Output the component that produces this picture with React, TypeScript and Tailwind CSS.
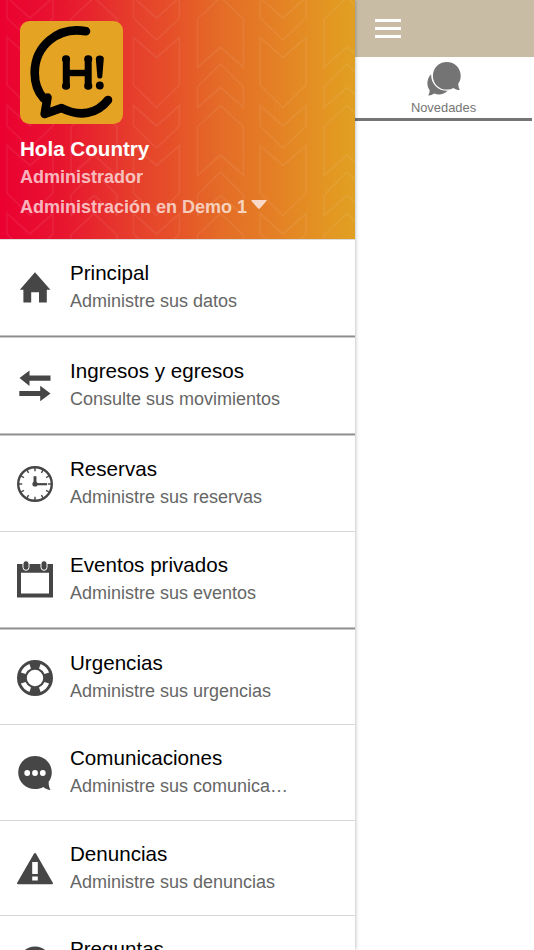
import type { ReactNode } from "react";
import { clsx } from "clsx";

interface MenuItem {
  title: string;
  subtitle: string;
  icon: ReactNode;
  divider: "thick" | "thin";
}

const HomeIcon = () => (
  <svg className="h-9 w-9" viewBox="0 0 36 36" fill="currentColor">
    <path d="M18 2.300 2.800 19.800h3.600v12.800h7.800V22.200h7.800v10.400h7.800V19.800h3.600z" />
  </svg>
);

const SwapIcon = () => (
  <svg className="h-9 w-9" viewBox="0 0 36 36" fill="currentColor">
    <path d="M2.500 10 12.500 2.400v5.200h21v5.100h-21v5.200z" />
    <path d="M33.500 25.500 23.200 17.800V23H2.300v5.100h20.900v5.200z" />
  </svg>
);

const ClockIcon = () => (
  <svg className="h-9 w-9" viewBox="0 0 36 36" fill="none" stroke="currentColor">
    <circle cx="18" cy="18" r="16.800" strokeWidth="2.400" />
    {[0, 30, 60, 90, 120, 150, 180, 210, 240, 270, 300, 330].map((deg) => (
      <path key={deg} d="M18 2v3.200" strokeWidth="1.400" transform={`rotate(${deg} 18 18)`} />
    ))}
    <path d="M18 18V10.200" strokeWidth="2.900" />
    <path d="M18 18.200h12" strokeWidth="2.200" />
    <circle cx="18" cy="18" r="2.600" fill="currentColor" stroke="none" />
  </svg>
);

const CalendarIcon = () => (
  <svg className="h-9 w-9 overflow-visible" viewBox="0 0 36 36">
    <path fill="currentColor" fillRule="evenodd" d="M0 2h36v33.600H0zM4 10.800v20.800h28V10.800z" />
    <rect x="6" y="-1.300" width="6" height="9.600" rx="3" fill="currentColor" stroke="white" strokeWidth="1" />
    <rect x="24" y="-1.300" width="6" height="9.600" rx="3" fill="currentColor" stroke="white" strokeWidth="1" />
  </svg>
);

const LifebuoyIcon = () => (
  <svg className="h-9 w-9" viewBox="0 0 36 36" fill="none">
    <circle cx="18" cy="18" r="13.100" stroke="currentColor" strokeWidth="9.800" />
    {[0, 90, 180, 270].map((deg) => (
      <path
        key={deg}
        d="M23.600 3.900A15.200 15.200 0 0 1 32.100 12.400L27.500 14A10.300 10.300 0 0 0 22 8.500Z"
        fill="white"
        transform={`rotate(${deg} 18 18)`}
      />
    ))}
  </svg>
);

const ChatIcon = () => (
  <svg className="h-9 w-9" viewBox="0 0 36 36">
    <path
      fill="currentColor"
      d="M18 1C8.500 1 1.200 8.400 1.200 17.500S8.500 34 18 34c3.300 0 6-.7 8.300-2.100 2.200 1.800 4.500 2.800 7.200 3-1.300-2.400-2-5-1.800-8.100 1.900-2.700 3.100-5.700 3.100-9.300C34.800 8.400 27.500 1 18 1z"
    />
    <circle cx="10.200" cy="18" r="2.900" fill="white" />
    <circle cx="18" cy="18" r="2.900" fill="white" />
    <circle cx="25.800" cy="18" r="2.900" fill="white" />
  </svg>
);

const WarningIcon = () => (
  <svg className="h-9 w-9" viewBox="0 0 36 36" fill="currentColor">
    <path
      fillRule="evenodd"
      d="M18 2c.5 0 .8.200 1.100.7l16.700 29c.5.900.1 1.500-.9 1.500H1.100c-1 0-1.400-.6-.9-1.500l16.700-29c.3-.5.6-.7 1.100-.7zM15.200 11.100v12h5.600v-12zM15.200 25.400v4h5.600v-4z"
    />
  </svg>
);

const QuestionIcon = () => (
  <svg className="h-9 w-9" viewBox="0 0 36 36" fill="currentColor">
    <circle cx="18" cy="17" r="16.500" />
  </svg>
);

const menu: MenuItem[] = [
  { title: "Principal", subtitle: "Administre sus datos", icon: <HomeIcon />, divider: "thick" },
  { title: "Ingresos y egresos", subtitle: "Consulte sus movimientos", icon: <SwapIcon />, divider: "thick" },
  { title: "Reservas", subtitle: "Administre sus reservas", icon: <ClockIcon />, divider: "thin" },
  { title: "Eventos privados", subtitle: "Administre sus eventos", icon: <CalendarIcon />, divider: "thick" },
  { title: "Urgencias", subtitle: "Administre sus urgencias", icon: <LifebuoyIcon />, divider: "thin" },
  { title: "Comunicaciones", subtitle: "Administre sus comunica…", icon: <ChatIcon />, divider: "thin" },
  { title: "Denuncias", subtitle: "Administre sus denuncias", icon: <WarningIcon />, divider: "thin" },
  { title: "Preguntas", subtitle: "", icon: <QuestionIcon />, divider: "thin" },
];

// Outlined arrows that repeat behind the profile block
const ArrowPattern = () => (
  <svg className="absolute inset-0 h-full w-full" fill="none" stroke="white" strokeOpacity="0.065" strokeWidth="1.700">
    <defs>
      <g id="arrows-down">
        <path d="M-23 37.500 0 57.500 23 37.500V85L0 107.500-23 85z" />
        <path d="M-23 105.500 0 126 23 105.500V126L0 148-23 126z" />
      </g>
      <g id="arrows-up">
        <path d="M-23 67.500 0 47 23 67.500V19L0-2.500-23 19z" />
        <path d="M-23 107.500 0 87.500 23 107.500V87L0 64-23 87z" />
      </g>
    </defs>
    {[-108, 0, 108, 216].map((y) => (
      <g key={y}>
        {[30, 156.5, 283].map((x) => (
          <use key={x} href="#arrows-down" x={x} y={y} />
        ))}
        {[94, 220.5, 347].map((x) => (
          <use key={x} href="#arrows-up" x={x} y={y} />
        ))}
      </g>
    ))}
  </svg>
);

const Logo = () => (
  <svg className="block h-[103px] w-[103px]" viewBox="0 0 103 103" fill="none" stroke="black">
    <rect width="103" height="103" rx="9.500" fill="#e4a323" stroke="none" />
    <g strokeWidth="8.600" strokeLinecap="round" strokeLinejoin="round">
      <path d="M66 10.300C38 5 14.700 25 14.700 52c0 11 3.300 19 9 25.500" />
      <path d="M27.500 76.500 24.700 93 41.500 87C60 96.500 77 93 88 79" />
    </g>
    <path d="M46.300 38v27M68.200 38v27" strokeWidth="7" />
    <path d="M46 52h22" strokeWidth="6.400" />
    <path d="M45.800 38h.5M68 38h.5M45.800 65h.5M68 65h.5" strokeWidth="7.600" strokeLinecap="round" />
    <path d="M75.800 37.500c0-4 8-4 8 0l-1.500 18c-.2 2.800-4.800 2.800-5 0z" fill="black" stroke="none" />
    <circle cx="79.800" cy="64.500" r="3.900" fill="black" stroke="none" />
  </svg>
);

const NewsIcon = () => (
  <svg className="h-[34px] w-[34px]" viewBox="0 0 34 34" fill="#747474">
    <path d="M4.100 12.200C1.400 14.800.3 18.300.4 21.800c.1 2.500.9 4.600 2.300 6.400-.1 2-.6 3.700-1.400 5.500 2.200-.2 4.300-.9 6-2.100 4.800 1.700 9.700.9 13.400-2.800C11.900 29.200 3.800 22.300 4.100 12.200z" />
    <path d="M19.800.1C11.900.1 5.900 6.300 5.900 13.900s6 13.700 13.900 13.700c2.500 0 4.600-.6 6.500-1.600 1.800 1.300 4 2 6.500 2.100-1-2.200-1.500-4.200-1.600-6.400 1.600-2.200 2.500-4.900 2.500-7.800C33.700 6.300 27.700.1 19.800.1z" />
  </svg>
);

function MenuRow({ item }: { item: MenuItem }) {
  return (
    <li>
      <a
        href="#"
        className={clsx("flex items-center pl-[17px]", item.divider === "thick" ? "h-[95px] pb-px" : "h-[94.500px]")}
      >
        <span className="mt-0.5 shrink-0 text-[#464646]">{item.icon}</span>
        <div className="ml-[17px] w-[222px]">
          <p className="text-[20.600px] leading-7 text-black">{item.title}</p>
          <p className="h-7 truncate text-[18px] leading-7 text-[#666]">{item.subtitle}</p>
        </div>
      </a>
      <div
        className={clsx(
          item.divider === "thick"
            ? "h-[3px] border-y border-t-[#c2c2c2] border-b-[#cacaca] bg-[#8e8e8e]"
            : "h-px bg-[#d6d6d6]"
        )}
      />
    </li>
  );
}

export default function App() {
  return (
    <div className="flex h-[950px] w-[534px] overflow-hidden bg-white font-['Liberation_Sans',Arial,sans-serif]">
      <aside className="relative z-10 w-[355px] shrink-0 bg-white shadow-[0_0_4px_rgba(0,0,0,0.35)]">
        <header className="relative h-[239px] overflow-hidden bg-[linear-gradient(90deg,#eb0031_0%,#e8162f_18%,#e63f2c_38%,#e64f29_48%,#e46c27_62%,#e47f25_77%,#e39722_93%,#e0a022_100%)] pl-5 pt-[21px]">
          <ArrowPattern />
          <div className="relative">
            <Logo />
            <h1 className="mt-[11px] text-[20.600px] font-bold leading-7 text-white">Hola Country</h1>
            <p className="text-[18px] font-bold leading-7 text-white/70">Administrador</p>
            <button className="mt-0.5 flex text-[18px] font-bold leading-7 text-white/70">
              Administración en Demo 1
              <svg className="ml-1 mt-[7px] h-[9px] w-4" viewBox="0 0 16 9" fill="#fad9c8">
                <path d="M1 0h14c.8 0 1 .6.500 1.100L8.800 8.600c-.5.5-1.100.5-1.600 0L.5 1.100C0 .6.200 0 1 0z" />
              </svg>
            </button>
          </div>
        </header>
        <ul className="border-t border-[#dcdcdc]">
          {menu.map((item) => (
            <MenuRow key={item.title} item={item} />
          ))}
        </ul>
      </aside>

      <main className="flex-1">
        <div className="flex h-[57px] items-center bg-[#c8bca4] pl-5">
          <button className="flex w-[26px] flex-col gap-[5px]">
            <span className="h-[3px] bg-white" />
            <span className="h-[3px] bg-white" />
            <span className="h-[3px] bg-white" />
          </button>
        </div>
        <button className="flex w-[177px] flex-col items-center border-b-[3px] border-[#757575] pt-[5px]">
          <NewsIcon />
          <span className="mt-0.5 h-5 text-[12.900px] leading-5 text-[#757575]">Novedades</span>
        </button>
      </main>
    </div>
  );
}
